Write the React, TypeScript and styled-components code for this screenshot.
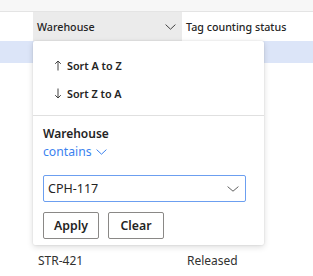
import React from "react";
import styled, { createGlobalStyle } from "styled-components";

const Global = createGlobalStyle`
  html, body { margin: 0; padding: 0; background: #ffffff; }
  body { font-family: "Noto Sans", "Open Sans", sans-serif; color: #242424; }
  * { box-sizing: border-box; }
`;

const Page = styled.div`
  position: relative;
  width: 313px;
  height: 276px;
  overflow: hidden;
  background: #ffffff;
`;

const TopBand = styled.div`
  height: 12px;
  background: #f7f7f7;
  border-bottom: 1px solid #e4e4e4;
`;

const Columns = `
  display: grid;
  grid-template-columns: 33px 149px 1fr;
`;

const HeaderRow = styled.div`
  ${Columns}
  height: 29px;
`;

const HeaderCell = styled.div<{ $active?: boolean }>`
  display: flex;
  align-items: center;
  justify-content: space-between;
  padding: 0 6px 0 4px;
  background: ${(p) => (p.$active ? "#ebebeb" : "transparent")};
  font-size: 10.7px;
  font-weight: 500;
  color: #242424;
  white-space: nowrap;
`;

const DataRow = styled.div<{ $selected?: boolean }>`
  ${Columns}
  height: ${(p) => (p.$selected ? "22px" : "26px")};
  padding-top: ${(p) => (p.$selected ? "0" : "5px")};
  align-items: center;
  background: ${(p) => (p.$selected ? "#dce5f8" : "transparent")};
  font-size: 12px;
  color: #323130;
`;

const Cell = styled.div`
  padding-left: 5px;
  white-space: nowrap;
`;

const Panel = styled.div`
  position: absolute;
  left: 33px;
  top: 41px;
  width: 231px;
  height: 204px;
  background: #ffffff;
  border-radius: 2px;
  box-shadow: 0 2px 6px rgba(0, 0, 0, 0.14), 0 0 2px rgba(0, 0, 0, 0.12);
  display: flex;
  flex-direction: column;
`;

const SortList = styled.div`
  display: flex;
  flex-direction: column;
  padding: 10px 0 8px;
`;

const SortItem = styled.div`
  display: flex;
  align-items: center;
  gap: 5px;
  height: 28px;
  padding-left: 21px;
  font-size: 10.8px;
  font-weight: 600;
  color: #242424;
`;

const Divider = styled.div`
  height: 1px;
  background: #e0e0e0;
`;

const FilterSection = styled.div`
  display: flex;
  flex-direction: column;
  padding: 9px 0 0 10px;
`;

const FieldLabel = styled.div`
  font-size: 12px;
  line-height: 18px;
  font-weight: 600;
  color: #242424;
`;

const OperatorLink = styled.div`
  display: flex;
  align-items: center;
  gap: 4px;
  font-size: 12.2px;
  line-height: 18px;
  color: #3b82ef;
`;

const ValueBox = styled.div`
  margin-top: 14px;
  width: 203px;
  height: 27px;
  border: 1px solid #6c9ff0;
  border-radius: 2px;
  display: flex;
  align-items: center;
  justify-content: space-between;
  padding: 0 6px 0 4px;
  font-size: 12.5px;
  color: #242424;
`;

const ButtonRow = styled.div`
  display: flex;
  gap: 9px;
  margin-top: 10px;
`;

const Button = styled.div`
  width: 56px;
  height: 27px;
  border: 1px solid #8a8886;
  border-radius: 2px;
  display: flex;
  align-items: center;
  justify-content: center;
  font-size: 12.3px;
  font-weight: 600;
  color: #242424;
  background: #ffffff;
`;

const Chevron = ({ w = 11, h = 6, color = "#424242" }: { w?: number; h?: number; color?: string }) => (
  <svg width={w} height={h} viewBox={`0 0 ${w} ${h}`} fill="none">
    <path d={`M0.6 0.6 L${w / 2} ${h - 0.8} L${w - 0.6} 0.6`} stroke={color} strokeWidth="1" />
  </svg>
);

const ArrowUp = () => (
  <svg width="8" height="11" viewBox="0 0 8 11" fill="none">
    <path d="M4 10.5 V1 M1.2 3.8 L4 1 L6.8 3.8" stroke="#424242" strokeWidth="1" />
  </svg>
);

const ArrowDown = () => (
  <svg width="8" height="11" viewBox="0 0 8 11" fill="none">
    <path d="M4 0.5 V10 M1.2 7.2 L4 10 L6.8 7.2" stroke="#424242" strokeWidth="1" />
  </svg>
);

// Rows hidden beneath the open filter panel hold no visible text.
const rows = [
  ["", ""],
  ["", ""],
  ["", ""],
  ["", ""],
  ["", ""],
  ["", ""],
  ["", ""],
  ["STR-421", "Released"],
];

export default function App() {
  return (
    <Page>
      <Global />
      <TopBand />
      <HeaderRow>
        <HeaderCell />
        <HeaderCell $active>
          <span>Warehouse</span>
          <Chevron w={11} h={6} color="#424242" />
        </HeaderCell>
        <HeaderCell>Tag counting status</HeaderCell>
      </HeaderRow>
      <DataRow $selected>
        <Cell />
        <Cell />
        <Cell />
      </DataRow>
      {rows.map(([wh, st], i) => (
        <DataRow key={i}>
          <Cell />
          <Cell>{wh}</Cell>
          <Cell>{st}</Cell>
        </DataRow>
      ))}
      <Panel>
        <SortList>
          <SortItem>
            <ArrowUp />
            <span>Sort A to Z</span>
          </SortItem>
          <SortItem>
            <ArrowDown />
            <span>Sort Z to A</span>
          </SortItem>
        </SortList>
        <Divider />
        <FilterSection>
          <FieldLabel>Warehouse</FieldLabel>
          <OperatorLink>
            <span>contains</span>
            <Chevron w={11} h={6} color="#3b82ef" />
          </OperatorLink>
          <ValueBox>
            <span>CPH-117</span>
            <Chevron w={12} h={6} color="#616161" />
          </ValueBox>
          <ButtonRow>
            <Button>Apply</Button>
            <Button>Clear</Button>
          </ButtonRow>
        </FilterSection>
      </Panel>
    </Page>
  );
}
